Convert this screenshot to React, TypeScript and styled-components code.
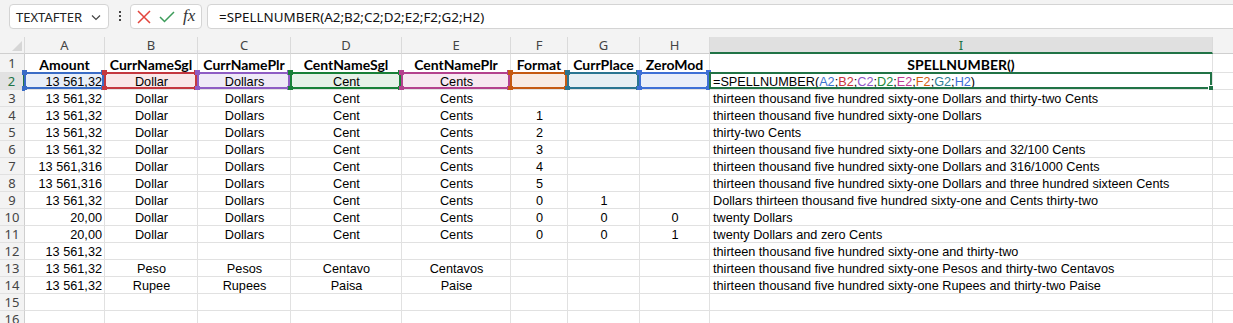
import React from "react";
import styled, { createGlobalStyle } from "styled-components";

const uiFont = `"Noto Sans", "Open Sans", sans-serif`;
const cellFont = `"Liberation Sans", Arial, sans-serif`;
const boldFont = `Lato, "Noto Sans", sans-serif`;
const green = "#217346";

const GlobalStyle = createGlobalStyle`
  html, body { margin: 0; padding: 0; background: #f3f3f3; }
  #root { width: 1233px; height: 323px; overflow: hidden; }
`;

// J is only a sliver at the right edge, its letter is off screen
const letters = ["A", "B", "C", "D", "E", "F", "G", "H", "I", ""];
const aligns = ["right", "center", "center", "center", "center", "center", "center", "center", "left", "left"];

// range colours used by the formula in I2
const ranges = [
  { ref: "A2", line: "#3a6cc6", fill: "#e8eef8", text: "#3d73d0" },
  { ref: "B2", line: "#c4373f", fill: "#f9e7e8", text: "#c9333c" },
  { ref: "C2", line: "#8e5cc4", fill: "#efeaf7", text: "#9057c7" },
  { ref: "D2", line: "#188038", fill: "#e6f1e8", text: "#1d8a3a" },
  { ref: "E2", line: "#b4418e", fill: "#f7e8f1", text: "#c03c94" },
  { ref: "F2", line: "#c55a11", fill: "#f8ebe3", text: "#d35d12" },
  { ref: "G2", line: "#2a7591", fill: "#e7eff3", text: "#2e7d96" },
  { ref: "H2", line: "#3d6fd6", fill: "#e9eef9", text: "#3c6ed8" },
];

const row1 = ["Amount", "CurrNameSgl", "CurrNamePlr", "CentNameSgl", "CentNamePlr", "Format", "CurrPlace", "ZeroMod", "SPELLNUMBER()", ""];
const row2 = ["13 561,32", "Dollar", "Dollars", "Cent", "Cents", "", "", ""];

const t = "thirteen thousand five hundred sixty-one";
const usd = ["Dollar", "Dollars", "Cent", "Cents"];
const data: string[][] = [
  ["13 561,32", ...usd, "", "", "", `${t} Dollars and thirty-two Cents`],
  ["13 561,32", ...usd, "1", "", "", `${t} Dollars`],
  ["13 561,32", ...usd, "2", "", "", "thirty-two Cents"],
  ["13 561,32", ...usd, "3", "", "", `${t} Dollars and 32/100 Cents`],
  ["13 561,316", ...usd, "4", "", "", `${t} Dollars and 316/1000 Cents`],
  ["13 561,316", ...usd, "5", "", "", `${t} Dollars and three hundred sixteen Cents`],
  ["13 561,32", ...usd, "0", "1", "", `Dollars ${t} and Cents thirty-two`],
  ["20,00", ...usd, "0", "0", "0", "twenty Dollars"],
  ["20,00", ...usd, "0", "0", "1", "twenty Dollars and zero Cents"],
  ["13 561,32", "", "", "", "", "", "", "", `${t} and thirty-two`],
  ["13 561,32", "Peso", "Pesos", "Centavo", "Centavos", "", "", "", `${t} Pesos and thirty-two Centavos`],
  ["13 561,32", "Rupee", "Rupees", "Paisa", "Paise", "", "", "", `${t} Rupees and thirty-two Paise`],
  ["", "", "", "", "", "", "", "", ""],
  ["", "", "", "", "", "", "", "", ""],
];

export default function App() {
  return (
    <>
      <GlobalStyle />
      <Toolbar>
        <NameBox>
          <span>TEXTAFTER</span>
          <svg width="12" height="12" viewBox="0 0 12 12">
            <path d="M2 4.5 L6 8.5 L10 4.5" fill="none" stroke="#444" strokeWidth="1.2" />
          </svg>
        </NameBox>
        <Dots>
          <i />
          <i />
          <i />
        </Dots>
        <ActionBox>
          <svg width="14" height="14" viewBox="0 0 14 14">
            <path d="M1 1 L13 13 M13 1 L1 13" stroke="#e3443c" strokeWidth="1.5" />
          </svg>
          <svg width="16" height="12" viewBox="0 0 16 12">
            <path d="M1 6 L5.5 10.5 L15 1" fill="none" stroke="#3c9c5a" strokeWidth="1.5" />
          </svg>
          <Fx>fx</Fx>
        </ActionBox>
        <FormulaBox>=SPELLNUMBER(A2;B2;C2;D2;E2;F2;G2;H2)</FormulaBox>
      </Toolbar>

      <Sheet>
        <Corner>
          <svg width="10" height="10" viewBox="0 0 10 10">
            <path d="M10 0 L10 10 L0 10 Z" fill="#d6d6d6" />
          </svg>
        </Corner>
        {letters.map((l, i) => (
          <ColHead key={i} $active={l === "I"}>
            {l}
          </ColHead>
        ))}

        <RowHead>1</RowHead>
        {row1.map((txt, i) => (
          <Cell key={i} $align="center" $bold>
            {txt}
          </Cell>
        ))}

        <RowHead $active>2</RowHead>
        {ranges.map((r, i) => (
          <Cell key={r.ref} $align={aligns[i]} $fill={r.fill}>
            {row2[i]}
            <Frame $c={r.line}>
              <Knob $c={r.line} $x="l" $y="t" />
              <Knob $c={r.line} $x="r" $y="t" />
              <Knob $c={r.line} $x="l" $y="b" />
              <Knob $c={r.line} $x="r" $y="b" />
            </Frame>
          </Cell>
        ))}
        <Cell $align="left">
          <span>=SPELLNUMBER(</span>
          {ranges.map((r, i) => (
            <React.Fragment key={r.ref}>
              <span style={{ color: r.text }}>{r.ref}</span>
              {i < ranges.length - 1 ? ";" : ")"}
            </React.Fragment>
          ))}
          <ActiveFrame>
            <FillHandle />
          </ActiveFrame>
        </Cell>
        <Cell $align="left" />

        {data.map((row, r) => (
          <React.Fragment key={r}>
            <RowHead>{r + 3}</RowHead>
            {row.map((txt, c) => (
              <Cell key={c} $align={aligns[c]}>
                {txt}
              </Cell>
            ))}
            <Cell $align="left" />
          </React.Fragment>
        ))}
      </Sheet>
    </>
  );
}

const Toolbar = styled.div`
  display: flex;
  align-items: flex-start;
  height: 37px;
  box-sizing: border-box;
  padding: 4px 0 0 9px;
  font-family: ${uiFont};
  overflow: hidden;
`;

const NameBox = styled.div`
  width: 100px;
  height: 25px;
  box-sizing: border-box;
  display: flex;
  align-items: center;
  justify-content: space-between;
  padding: 0 6px 0 6px;
  background: #fff;
  border: 1px solid #d4d4d4;
  border-radius: 4px;
  font-size: 13px;
  color: #222;
`;

const Dots = styled.div`
  display: flex;
  flex-direction: column;
  gap: 2px;
  margin: 7px 0 0 10px;
  i {
    display: block;
    width: 2px;
    height: 2px;
    background: #444;
  }
`;

const ActionBox = styled.div`
  width: 72px;
  height: 25px;
  margin-left: 9px;
  box-sizing: border-box;
  display: flex;
  align-items: center;
  gap: 8px;
  padding-left: 6px;
  background: #fff;
  border: 1px solid #d4d4d4;
  border-radius: 4px;
`;

const Fx = styled.span`
  font-family: "Liberation Serif", "DejaVu Serif", serif;
  font-style: italic;
  font-size: 17px;
  color: #333;
  margin-top: -2px;
`;

const FormulaBox = styled.div`
  flex: 1;
  height: 25px;
  margin: 0 -10px 0 5px;
  box-sizing: border-box;
  display: flex;
  align-items: center;
  padding-left: 11px;
  background: #fff;
  border: 1px solid #d4d4d4;
  border-radius: 4px;
  font-size: 13.4px;
  color: #111;
  white-space: nowrap;
`;

const Sheet = styled.div`
  display: grid;
  grid-template-columns: 25px 80px 93px 93px 111px 109px 57px 72px 70px 503px 64px;
  grid-template-rows: 17px 19px;
  grid-auto-rows: 17px;
  width: 1277px;
  background: #fff;
`;

const Corner = styled.div`
  display: flex;
  align-items: flex-end;
  justify-content: flex-end;
  padding: 0 2px 2px 0;
  background: #f3f3f3;
  border-right: 1px solid #d9d9d9;
  border-bottom: 1px solid #cfcfcf;
`;

const ColHead = styled.div<{ $active?: boolean }>`
  box-sizing: border-box;
  display: flex;
  align-items: center;
  justify-content: center;
  font-family: ${uiFont};
  font-size: 13px;
  color: ${(p) => (p.$active ? green : "#444")};
  background: ${(p) => (p.$active ? "#e0e0e0" : "#f3f3f3")};
  border-right: 1px solid #dadada;
  border-bottom: ${(p) => (p.$active ? `2px solid ${green}` : "1px solid #cfcfcf")};
`;

const RowHead = styled.div<{ $active?: boolean }>`
  box-sizing: border-box;
  display: flex;
  align-items: center;
  justify-content: center;
  font-family: ${uiFont};
  font-size: 13px;
  color: ${(p) => (p.$active ? green : "#444")};
  background: ${(p) => (p.$active ? "#e2e2e2" : "#f3f3f3")};
  border-right: ${(p) => (p.$active ? `2px solid ${green}` : "1px solid #cfcfcf")};
  border-bottom: 1px solid #e1e1e1;
`;

const Cell = styled.div<{ $align: string; $bold?: boolean; $fill?: string }>`
  position: relative;
  box-sizing: border-box;
  display: flex;
  align-items: center;
  justify-content: ${(p) => (p.$align === "right" ? "flex-end" : p.$align === "center" ? "center" : "flex-start")};
  padding: ${(p) => (p.$bold ? "2px 2px 0" : "1px 2px 0 3px")};
  white-space: nowrap;
  font-family: ${(p) => (p.$bold ? boldFont : cellFont)};
  font-weight: ${(p) => (p.$bold ? 700 : 400)};
  font-size: ${(p) => (p.$bold ? "14px" : "12.7px")};
  color: #000;
  background: ${(p) => p.$fill || "#fff"};
  border-right: 1px solid #e1e1e1;
  border-bottom: 1px solid #e1e1e1;
`;

const Frame = styled.div<{ $c: string }>`
  position: absolute;
  top: -1px;
  left: -1px;
  right: 0;
  bottom: 0;
  border: 2px solid ${(p) => p.$c};
  pointer-events: none;
`;

const Knob = styled.span<{ $c: string; $x: "l" | "r"; $y: "t" | "b" }>`
  position: absolute;
  width: 5px;
  height: 5px;
  background: ${(p) => p.$c};
  ${(p) => (p.$x === "l" ? "left: -4px;" : "right: -4px;")}
  ${(p) => (p.$y === "t" ? "top: -4px;" : "bottom: -4px;")}
`;

const ActiveFrame = styled.div`
  position: absolute;
  top: -1px;
  left: -1px;
  right: 0;
  bottom: 0;
  border: 2px solid ${green};
  pointer-events: none;
`;

const FillHandle = styled.span`
  position: absolute;
  right: -5px;
  bottom: -5px;
  width: 5px;
  height: 5px;
  background: ${green};
  border: 1px solid #fff;
`;
